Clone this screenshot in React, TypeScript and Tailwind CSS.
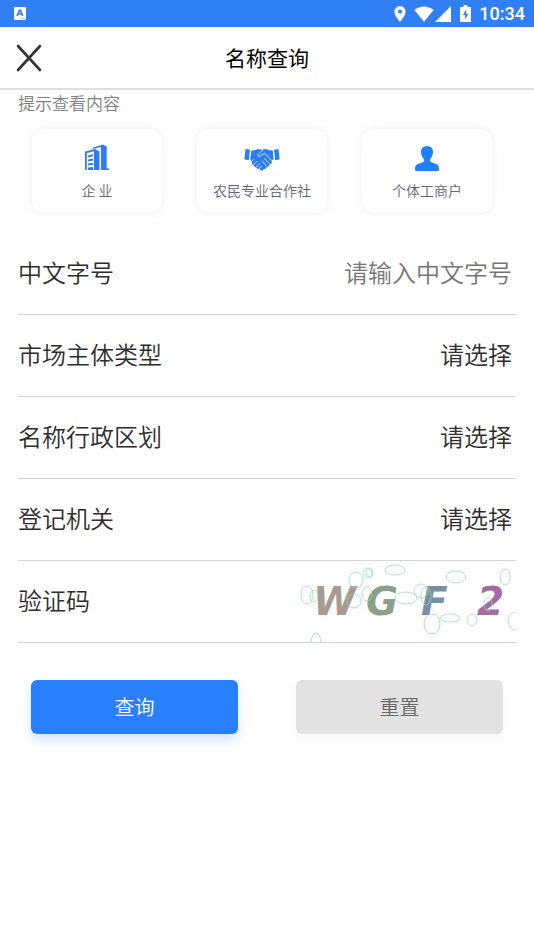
import type { ReactNode } from "react";

function StatusBar() {
  return (
    <div className="flex h-[27px] items-center justify-between bg-[#317ff5] pl-3.5 pr-[9px] text-white">
      <svg width="12" height="14" viewBox="0 0 12 14" aria-hidden="true">
        <rect width="12" height="13" rx="1" fill="#fff" />
        <path d="M3 9 L5.4 3.4 H6.4 L8.8 9 M4.2 7 H7.6" fill="none" stroke="#317ff5" strokeWidth="1.6" />
        <path d="M7 11.5h4" stroke="#a9cafa" strokeWidth="1" />
      </svg>
      <div className="flex items-center">
        <svg width="12" height="16" viewBox="0 0 12 16" fill="#fff" aria-hidden="true">
          <path fillRule="evenodd" d="M6 0a5.6 5.6 0 0 0-5.6 5.6C.4 9.800 6 16 6 16s5.600-6.200 5.600-10.400A5.600 5.600 0 0 0 6 0Zm0 3.600a2 2 0 1 1 0 4 2 2 0 0 1 0-4Z" />
        </svg>
        <svg className="ml-2" width="20" height="16" viewBox="0 0 20 16" fill="#fff" aria-hidden="true">
          <path d="M.4 4C6-.8 14-.8 19.600 4L10 15.700Z" />
        </svg>
        <svg className="ml-px" width="16" height="16" viewBox="0 0 16 16" fill="#fff" aria-hidden="true">
          <path d="M16 0v16H0Z" />
        </svg>
        <svg className="ml-[9px]" width="11" height="17" viewBox="0 0 11 17" aria-hidden="true">
          <path d="M3.500 0h4v2H11v15H0V2h3.500Z" fill="#fff" />
          <path d="M6.300 4.500 2.800 10h2.300v4.500L8.400 8.800H6.100Z" fill="#317ff5" />
        </svg>
        <time className="ml-2 font-[Roboto,sans-serif] text-[18px] font-medium leading-[27px]">10:34</time>
      </div>
    </div>
  );
}

function BuildingIcon() {
  return (
    <svg width="26" height="28" viewBox="0 0 26 28" fill="#2b7cf6" aria-hidden="true">
      <path d="M1 8.500 11 6 15.500 8.500V27H10V8.300L2.800 10V27H1Z" />
      <path d="m4 12.500 5-1.200v2L4 14.500Zm0 4 5-1v2l-5 1Zm0 4 5-.8v2l-5 .8Zm0 4 5-.4V27H4Z" />
      <path d="M8 5 19 1.500l3.700 2V25.500H25V27h-8V4.100L9.500 5.900Z" />
    </svg>
  );
}

function HandshakeIcon() {
  return (
    <svg width="36" height="28" viewBox="0 0 36 28" aria-hidden="true">
      <path d="m1.500 6 4.500.8-1.200 10.400L.3 16.200ZM34.500 6 30 6.800l1.200 10.400 4.500-1Z" fill="#2b7cf6" />
      <path
        d="M7.500 7.500 11 7.300 14.200 6l4 .7L22 6l3 1.300h3.600l1.200 8.700-2.100 1.800c.5 1.700-.6 3.400-2.100 3.200-.2 2-1.400 3-2.700 2.500-.4 2-1.700 3-3 2.200-.8 2-2.700 2.400-4 1.100l-1-1c-1.500.4-2.500-.4-2.700-1.600-1.500.1-2.300-.8-2.300-2-1.500 0-2.200-1-1.900-2.400l-1.800-3.700Z"
        fill="#2b7cf6"
      />
      <path
        d="m18.500 7.200-5 5.300c1.600 1.600 3.700 1 5.200-1.500l2.300-.3 6.500 6.800M20.500 15.500l4.600 4.700M18 18l4 4.300M7.600 18.500l2-2M9.800 21.500l3-3M12.300 23.800l3-3M15.200 25.600l2-2"
        fill="none"
        stroke="#fff"
        strokeWidth="0.8"
        strokeLinecap="round"
        strokeLinejoin="round"
      />
    </svg>
  );
}

function PersonIcon() {
  return (
    <svg width="26" height="28" viewBox="0 0 26 28" fill="#1f80fb" aria-hidden="true">
      <path d="M13 3c-4 0-6.200 2.800-6 6.300.2 3.200 1.400 5.300 3 6.900.5 1.400 0 2.500-1.500 3L4 21c-2.300.9-3 2.100-3 4.800v1c0 .7.500 1.200 1.200 1.200h21.600c.7 0 1.200-.5 1.200-1.200v-1c0-2.700-.7-3.900-3-4.800l-4.500-1.800c-1.500-.5-2-1.600-1.500-3 1.600-1.600 2.800-3.700 3-6.900.2-3.500-2-6.300-6-6.300Z" />
    </svg>
  );
}

function TypeCard({ icon, label }: { icon: ReactNode; label: string }) {
  return (
    <button
      type="button"
      className="flex h-[84px] flex-col items-center rounded-xl bg-white pt-[14px] shadow-[0_0_8px_rgba(0,0,0,0.08)]"
    >
      {icon}
      <span className="mt-[9px] whitespace-pre text-[14px] leading-5 text-[#5c6478]">{label}</span>
    </button>
  );
}

const rowClass = "flex h-[82px] items-center justify-between border-b border-[#d4d4d4]";

function SelectRow({ id, label }: { id: string; label: string }) {
  return (
    <div className={rowClass}>
      <label htmlFor={id} className="pb-1">
        {label}
      </label>
      <select id={id} className="w-40 appearance-none bg-transparent pb-1 pr-1 text-right outline-none">
        <option>请选择</option>
      </select>
    </div>
  );
}

const rings = [
  [17, 33, 6, 9],
  [24, 34, 4, 6],
  [66, 18, 7, 8],
  [78, 11, 5, 5],
  [79, 11, 3, 4],
  [105, 8, 10, 5],
  [64, 39, 7, 7],
  [77, 32, 5, 7],
  [116, 36, 11, 6],
  [131, 29, 7, 7],
  [136, 34, 5, 9],
  [142, 62, 8, 10],
  [160, 56, 10, 4],
  [166, 15, 10, 6],
  [215, 15, 5, 8],
  [182, 58, 5, 6],
  [198, 42, 4, 7],
  [226, 59, 8, 9],
  [26, 81, 5, 10],
];

const letters = [
  { char: "W", x: 23, fill: "#a89a8f" },
  { char: "G", x: 76, fill: "#8c9f8a" },
  { char: "F", x: 131, fill: "#7890a5" },
  { char: "2", x: 187, fill: "#a36ba5" },
];

function Captcha() {
  return (
    <svg width="226" height="80" viewBox="0 0 226 80" role="img" aria-label="WGF2">
      {letters.map((l) => (
        <text
          key={l.char}
          x={l.x}
          y="53"
          fill={l.fill}
          className="font-['DejaVu_Sans',sans-serif] text-[39px] font-bold italic"
        >
          {l.char}
        </text>
      ))}
      {rings.map(([cx, cy, rx, ry]) => (
        <ellipse
          key={`${cx}-${cy}`}
          cx={cx}
          cy={cy}
          rx={rx}
          ry={ry}
          fill="none"
          stroke="#8fdcb0"
          strokeOpacity="0.75"
        />
      ))}
    </svg>
  );
}

export default function App() {
  return (
    <div className="min-h-screen bg-white font-['Noto_Sans_CJK_SC',sans-serif] font-[350] text-[#2d2d2d]">
      <StatusBar />
      <header className="grid h-[63px] grid-cols-[1fr_auto_1fr] items-center border-b-2 border-[#dedede] px-4">
        <button type="button" aria-label="关闭" className="w-[26px]">
          <svg width="26" height="28" viewBox="0 0 26 28" aria-hidden="true">
            <path d="m2 2 22 24M24 2 2 26" stroke="#333" strokeWidth="2.600" strokeLinecap="round" />
          </svg>
        </button>
        <h1 className="pb-0.5 text-[21px] font-normal leading-8 text-black">名称查询</h1>
      </header>
      <main>
        <p className="px-[18px] text-[17px] leading-[26px] text-[#808080]">提示查看内容</p>
        <div className="mt-[13px] grid grid-cols-3 gap-[35px] pl-8 pr-[42px]">
          <TypeCard icon={<BuildingIcon />} label="企 业" />
          <TypeCard icon={<HandshakeIcon />} label="农民专业合作社" />
          <TypeCard icon={<PersonIcon />} label="个体工商户" />
        </div>
        <form>
          <div className="mx-[18px] mt-5 text-[24px] leading-9">
            <div className={rowClass}>
              <label htmlFor="name" className="pb-1">
                中文字号
              </label>
              <input
                id="name"
                type="text"
                placeholder="请输入中文字号"
                className="w-60 bg-transparent pb-1 pr-1 text-right outline-none placeholder:text-[#757575]"
              />
            </div>
            <SelectRow id="type" label="市场主体类型" />
            <SelectRow id="region" label="名称行政区划" />
            <SelectRow id="office" label="登记机关" />
            <div className={rowClass}>
              <span className="pb-1">验证码</span>
              <Captcha />
            </div>
          </div>
          <div className="mt-[37px] grid grid-cols-2 gap-[58px] px-[31px] text-[20px] leading-8">
            <button
              type="button"
              className="h-[54px] rounded-md bg-[#2880ff] text-white shadow-[0_6px_12px_rgba(40,128,255,0.22)]"
            >
              查询
            </button>
            <button
              type="reset"
              className="h-[54px] rounded-md bg-[#e2e2e2] text-[#6a6a6a] shadow-[0_6px_12px_rgba(0,0,0,0.04)]"
            >
              重置
            </button>
          </div>
        </form>
      </main>
    </div>
  );
}
